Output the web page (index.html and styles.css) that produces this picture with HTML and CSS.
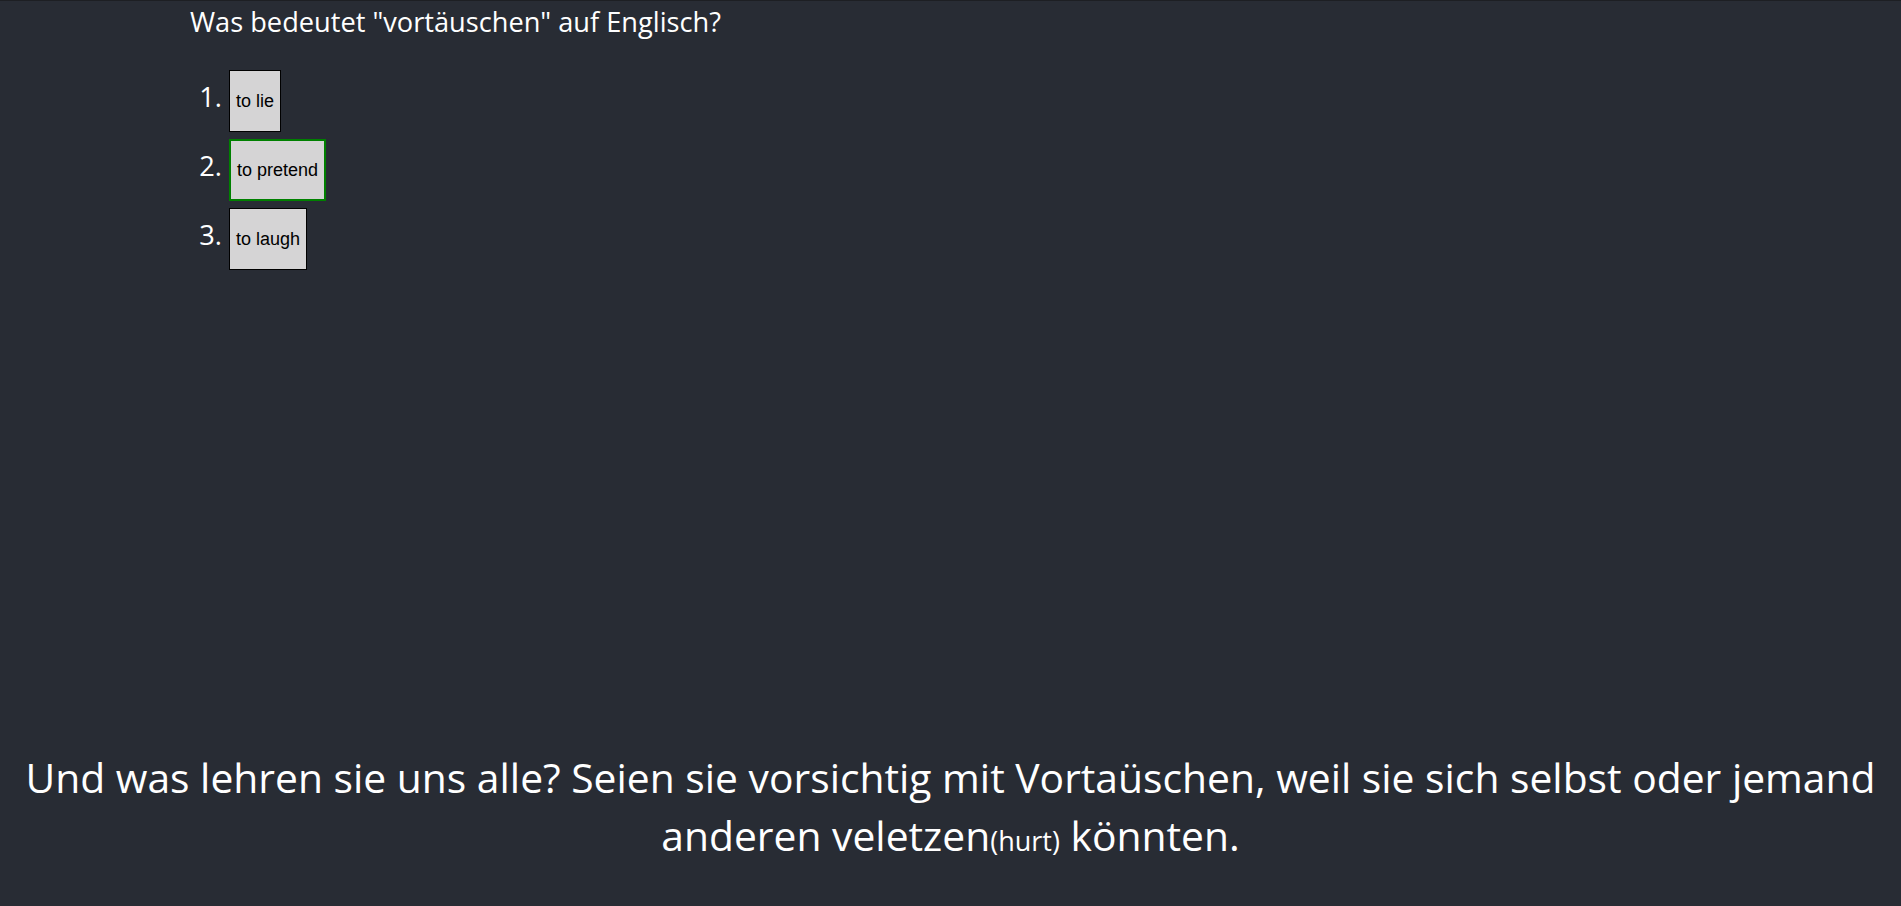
FILE: index.html
```html
<!DOCTYPE html>
<html lang="de">
<head>
<meta charset="utf-8">
<title>Quiz</title>
<link rel="stylesheet" href="styles.css">
</head>
<body>
<div class="app">
  <main class="quiz">
    <p class="question">Was bedeutet "vortäuschen" auf Englisch?</p>
    <ol class="answers">
      <li><button class="answer">to lie</button></li>
      <li><button class="answer correct">to pretend</button></li>
      <li><button class="answer">to laugh</button></li>
    </ol>
  </main>
  <p class="moral">Und was lehren sie uns alle? Seien sie vorsichtig mit Vortaüschen, weil sie sich selbst oder jemand anderen veletzen<span class="gloss">(hurt)</span> könnten.</p>
</div>
</body>
</html>
```

FILE: styles.css
```css
html, body {
  margin: 0;
  padding: 0;
  background: #282c34;
}

.app {
  box-sizing: border-box;
  height: 100vh;
  border-top: 1px solid #1d1f23;
  display: flex;
  flex-direction: column;
  justify-content: space-between;
  color: #ffffff;
  font-family: "Open Sans", "Noto Sans", sans-serif;
  font-size: 27.2px;
  line-height: 37.4px;
}

.quiz {
  padding-left: 190px;
}

.question {
  margin: 2px 0 0 0;
}

.answers {
  margin: 30px 0 0 0;
  padding-left: 39px;
}

.answers li + li {
  margin-top: 7px;
}

.answer {
  box-sizing: border-box;
  height: 62px;
  margin: 0;
  padding: 0 6px;
  background: #d5d4d5;
  color: #000000;
  border: 1px solid #000000;
  font-family: "Liberation Sans", Arial, sans-serif;
  font-size: 18px;
  vertical-align: baseline;
}

.answer.correct {
  border: 2px solid #008000;
}

.moral {
  margin: 0 0 37px 0;
  text-align: center;
  font-size: 40.8px;
  line-height: 57.5px;
}

.gloss {
  font-size: 27px;
}
```
